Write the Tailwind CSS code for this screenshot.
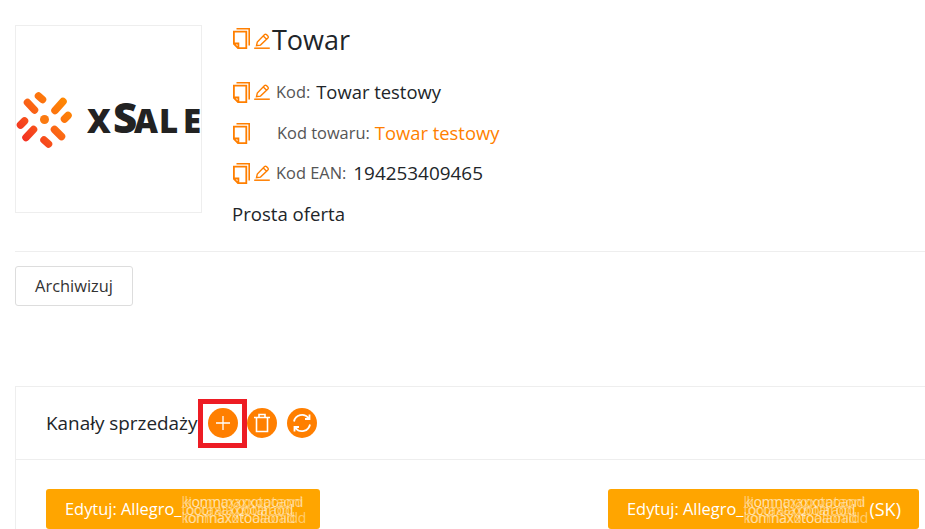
<!DOCTYPE html>
<html lang="pl">
<head>
  <meta charset="UTF-8" />
  <meta name="viewport" content="width=device-width, initial-scale=1.0" />
  <title>Towar</title>
  <script src="https://cdn.jsdelivr.net/npm/@tailwindcss/browser@4"></script>
</head>
<body class="bg-white h-[529px] overflow-hidden font-['Open_Sans',sans-serif] text-[#212529]">
  <svg class="hidden">
    <symbol id="copy" viewBox="0 0 17 21">
      <path d="M3.500 .8H16.200V17.500" fill="none" stroke="#ff7f00" stroke-width="1.600"/>
      <path d="M.9 3.700H13.300V20.100H5L.9 16Z M.9 15.500H5.400V20" fill="none" stroke="#ff7f00" stroke-width="1.800"/>
    </symbol>
    <symbol id="pencil" viewBox="0 0 16 16">
      <path d="M.2 15.200H15.800" stroke="#ff7f00" stroke-width="1.500"/>
      <path d="M2.500 12.600L3.300 9L10.600 1.600Q11.500 .8 12.400 1.600L13.900 3.100Q14.700 4 13.900 4.900L6.500 12.100ZM9.300 3L12.600 6.200" fill="none" stroke="#ff7f00" stroke-width="1.400"/>
    </symbol>
  </svg>

  <div class="pl-[15px] pt-[25px]">
    <!-- product header -->
    <div class="flex border-b border-[#eee] h-[227px]">
      <div class="w-[187px] h-[188px] border border-[#eee] overflow-hidden shrink-0">
        <svg width="187" height="187" viewBox="15 25 187 187">
          <defs>
            <linearGradient id="logo" gradientUnits="userSpaceOnUse" x1="20" y1="140" x2="66" y2="98">
              <stop offset="0" stop-color="#f22c24"/>
              <stop offset=".55" stop-color="#fb6a14"/>
              <stop offset="1" stop-color="#ff8a00"/>
            </linearGradient>
          </defs>
          <path fill="none" stroke="url(#logo)" stroke-width="7.500" stroke-linecap="round" d="M37.500 95L41.500 98.500M26.500 101.500L33.500 109M54 109.500L62 100.500M63.500 118L67 114.500M19.500 124L23.500 120M25 136.500L32.500 128.500M53.500 128.500L60.500 135.500M43 139L47.500 143"/>
          <circle cx="43.500" cy="118.500" r="4.500" fill="#fb7a10"/>
          <text y="131.500" fill="#222" font-family="Open Sans" font-weight="800"><tspan x="86" font-size="33">X</tspan><tspan x="112" font-size="42">S</tspan><tspan x="133" font-size="33">A</tspan><tspan x="158" font-size="33">L</tspan><tspan x="182" font-size="33">E</tspan></text>
        </svg>
      </div>

      <div class="ml-[30px]">
        <div class="flex items-start h-[30px]">
          <svg class="w-[17px] h-[21px] mt-[3px] ml-px"><use href="#copy"/></svg>
          <svg class="w-4 h-4 ml-1 mt-[8px]"><use href="#pencil"/></svg>
          <h1 class="ml-[2px] text-[27px] leading-[30px]">Towar</h1>
        </div>
        <div class="flex items-center h-[24px] mt-[25px]">
          <svg class="w-[17px] h-[21px] ml-px"><use href="#copy"/></svg>
          <svg class="w-4 h-4 ml-1"><use href="#pencil"/></svg>
          <span class="ml-[6px] text-[16.4px] text-[#555]">Kod:</span>
          <span class="ml-[6px] text-[18.4px]">Towar testowy</span>
        </div>
        <div class="flex items-center h-[24px] mt-[17px]">
          <svg class="w-[17px] h-[21px] ml-px"><use href="#copy"/></svg>
          <span class="ml-[27px] text-[16.4px] text-[#555]">Kod towaru:</span>
          <span class="ml-[5px] text-[18.4px] text-[#ff7f00]">Towar testowy</span>
        </div>
        <div class="flex items-center h-[24px] mt-[16px]">
          <svg class="w-[17px] h-[21px] ml-px"><use href="#copy"/></svg>
          <svg class="w-4 h-4 ml-1"><use href="#pencil"/></svg>
          <span class="ml-[6px] text-[16.4px] text-[#555]">Kod EAN:</span>
          <span class="ml-[7px] text-[18.9px]">194253409465</span>
        </div>
        <p class="mt-[17px] text-[18.6px] leading-[24px]">Prosta oferta</p>
      </div>
    </div>

    <button class="mt-[14px] h-[40px] w-[118px] border border-[#ddd] rounded-[3px] bg-white text-[16.4px] text-[#333]">Archiwizuj</button>

    <!-- sales channels card -->
    <div class="mt-[80px] border-t border-l border-[#eee]">
      <div class="flex items-center h-[73px] border-b border-[#eee] pl-[30px]">
        <span class="text-[18.9px]">Kanały sprzedaży</span>
        <span class="ml-px w-[49px] h-[49px] border-[5px] border-[#ed1c24] flex items-center justify-center">
          <span class="w-[30px] h-[30px] shrink-0 rounded-full bg-[#ff7f00] flex items-center justify-center">
            <svg width="16" height="16" viewBox="0 0 16 16"><path d="M8 1V15M1 8H15" stroke="#fff" stroke-width="1.300"/></svg>
          </span>
        </span>
        <span class="w-[30px] h-[30px] rounded-full bg-[#ff7f00] flex items-center justify-center">
          <svg width="18" height="20" viewBox="0 0 18 20" fill="none" stroke="#fff" stroke-width="1.600"><path d="M1 4.500H17M6 4.500V1.500H12V4.500M3.500 4.500V18.500H14.500V4.500"/></svg>
        </span>
        <span class="ml-[10px] w-[30px] h-[30px] rounded-full bg-[#ff7f00] flex items-center justify-center">
          <svg width="22" height="22" viewBox="0 0 22 22" fill="none" stroke="#fff" stroke-width="1.800"><path d="M3 9.500A8.200 8.200 0 0 1 17.500 6M18.500 2.500V7H14M19 12.500A8.200 8.200 0 0 1 4.500 16M3.500 19.500V15H8"/></svg>
        </span>
      </div>

      <div class="flex pl-[30px] pt-[29px]">
        <button class="flex items-center h-[40px] w-[274px] rounded-[3px] bg-[#ffa500] pl-[19px] text-[16.4px] text-white">
          Edytuj: Allegro_<span class="relative block w-[124px] h-[27px] text-[14px] leading-[9px] text-white/45 text-left tracking-[-0.3px] whitespace-nowrap"><span class="absolute left-0 top-[1px]">kiomnmaxxoptaoni</span><span class="absolute left-[3px] top-[1px]">konmaxxpotaoand</span><span class="absolute left-0 top-[9px]">tocorataxpolaronl</span><span class="absolute left-[4px] top-[9px]">ootaxaxpotaraod</span><span class="absolute left-0 top-[17px]">komnaxxtoolaoaidd</span><span class="absolute left-[3px] top-[17px]">ionmaxotoaaonid</span></span>
        </button>
        <button class="ml-[288px] flex items-center h-[40px] w-[311px] rounded-[3px] bg-[#ffa500] pl-[19px] text-[16.4px] text-white">
          Edytuj: Allegro_<span class="relative block w-[124px] h-[27px] text-[14px] leading-[9px] text-white/45 text-left tracking-[-0.3px] whitespace-nowrap"><span class="absolute left-0 top-[1px]">kiomnmaxxoptaoni</span><span class="absolute left-[3px] top-[1px]">konmaxxpotaoand</span><span class="absolute left-0 top-[9px]">tocorataxpolaronl</span><span class="absolute left-[4px] top-[9px]">ootaxaxpotaraod</span><span class="absolute left-0 top-[17px]">komnaxxtoolaoaidd</span><span class="absolute left-[3px] top-[17px]">ionmaxotoaaonid</span></span><span class="ml-[2px] text-[18px]">(SK)</span>
        </button>
      </div>
    </div>
  </div>
</body>
</html>
